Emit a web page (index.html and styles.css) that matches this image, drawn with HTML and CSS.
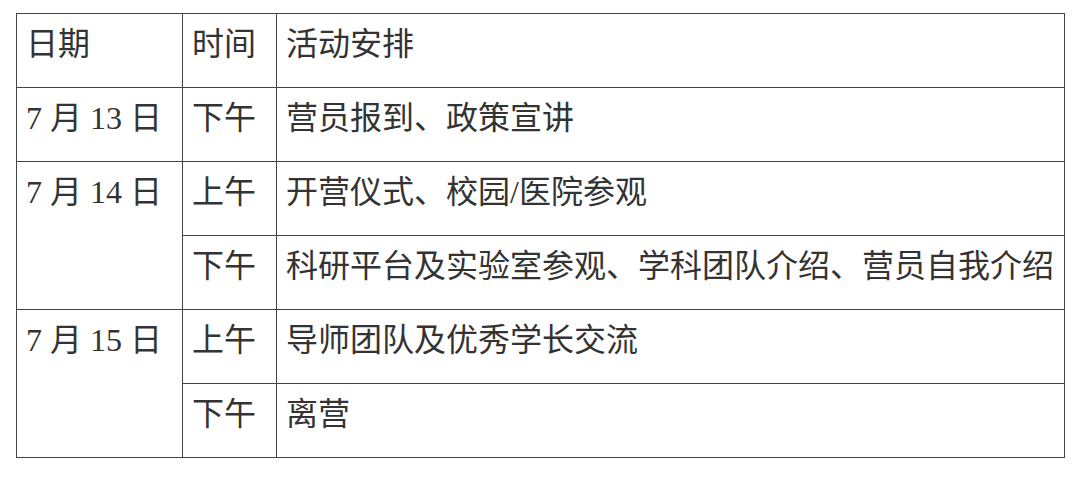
FILE: index.html
```html
<!DOCTYPE html>
<html lang="zh">
<head>
<meta charset="utf-8">
<title>日程安排</title>
<link rel="stylesheet" href="styles.css">
</head>
<body>
<table class="schedule">
  <colgroup>
    <col class="c-date">
    <col class="c-time">
    <col class="c-act">
  </colgroup>
  <tr>
    <td>日期</td>
    <td>时间</td>
    <td>活动安排</td>
  </tr>
  <tr>
    <td>7 月 13 日</td>
    <td>下午</td>
    <td>营员报到、政策宣讲</td>
  </tr>
  <tr>
    <td rowspan="2">7 月 14 日</td>
    <td>上午</td>
    <td>开营仪式、校园/医院参观</td>
  </tr>
  <tr>
    <td>下午</td>
    <td>科研平台及实验室参观、学科团队介绍、营员自我介绍</td>
  </tr>
  <tr>
    <td rowspan="2">7 月 15 日</td>
    <td>上午</td>
    <td>导师团队及优秀学长交流</td>
  </tr>
  <tr>
    <td>下午</td>
    <td>离营</td>
  </tr>
</table>
</body>
</html>
```

FILE: styles.css
```css
html, body {
  margin: 0;
  padding: 0;
  background: #ffffff;
}

body {
  padding: 13px 0 0 16px;
}

.schedule {
  border-collapse: collapse;
  table-layout: fixed;
  width: 1048px;
  font-family: "Liberation Serif", "Noto Sans CJK SC", serif;
  font-size: 32px;
  color: #333333;
}

.c-date { width: 166px; }
.c-time { width: 94px; }
.c-act { width: 788px; }

.schedule td {
  border: 1.5px solid #444444;
  height: 74px;
  box-sizing: border-box;
  padding: 8px 0 0 9px;
  vertical-align: top;
  line-height: 45px;
  white-space: nowrap;
}
```
